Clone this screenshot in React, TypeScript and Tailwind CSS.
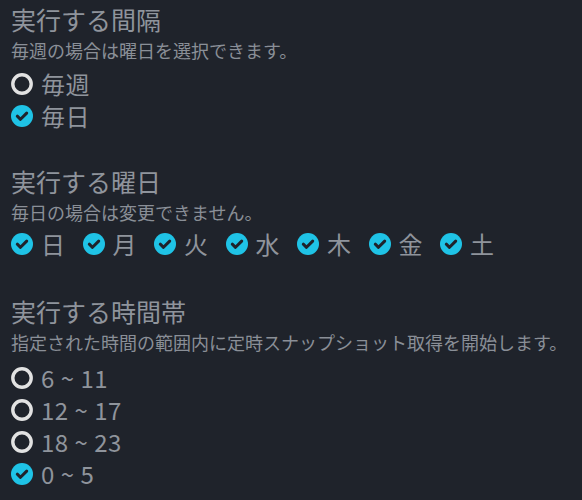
type Opt = { label: string; checked: boolean };

const intervals: Opt[] = [
  { label: "毎週", checked: false },
  { label: "毎日", checked: true },
];

const days: Opt[] = ["日", "月", "火", "水", "木", "金", "土"].map((d) => ({
  label: d,
  checked: true,
}));

const times: Opt[] = [
  { label: "6 ~ 11", checked: false },
  { label: "12 ~ 17", checked: false },
  { label: "18 ~ 23", checked: false },
  { label: "0 ~ 5", checked: true },
];

function Mark({ checked }: { checked: boolean }) {
  if (checked) {
    return (
      <svg viewBox="0 0 22 22" className="h-[22px] w-[22px] shrink-0">
        <circle cx="11" cy="11" r="11" fill="#1fc3e6" />
        <polyline
          points="6.3,11.2 9.5,14.3 15.7,8.1"
          fill="none"
          stroke="#1f232b"
          strokeWidth="3"
          strokeLinecap="round"
          strokeLinejoin="round"
        />
      </svg>
    );
  }
  return (
    <svg viewBox="0 0 22 22" className="h-[22px] w-[22px] shrink-0">
      <circle cx="11" cy="11" r="9.2" fill="none" stroke="#e2e2e2" strokeWidth="3.4" />
    </svg>
  );
}

function Option({ opt }: { opt: Opt }) {
  return (
    <div className="flex h-8 items-center gap-2">
      <Mark checked={opt.checked} />
      <span className="text-[24px] leading-8 tracking-[0.5px] text-[#8f949c]">
        {opt.label}
      </span>
    </div>
  );
}

function Section({
  title,
  note,
  children,
}: {
  title: string;
  note: string;
  children: React.ReactNode;
}) {
  return (
    <section>
      <h2 className="h-8 text-[25px] leading-8 text-[#8f949c]">{title}</h2>
      <p className="h-[30px] text-[18px] leading-[30px] text-[#8a8f97]">
        {note}
      </p>
      {children}
    </section>
  );
}

export default function App() {
  return (
    <div
      className="min-h-[500px] w-full bg-[#1f232b] pl-[11px] pt-[3px]"
      style={{ fontFamily: '"Noto Sans CJK JP", "Noto Sans", sans-serif' }}
    >
      <div className="flex flex-col gap-8">
        <Section title="実行する間隔" note="毎週の場合は曜日を選択できます。">
          <div className="mt-[3px] mb-px">
            {intervals.map((o) => (
              <Option key={o.label} opt={o} />
            ))}
          </div>
        </Section>
        <Section title="実行する曜日" note="毎日の場合は変更できません。">
          <div className="mt-px mb-[3px] flex gap-[17px]">
            {days.map((o) => (
              <Option key={o.label} opt={o} />
            ))}
          </div>
        </Section>
        <Section
          title="実行する時間帯"
          note="指定された時間の範囲内に定時スナップショット取得を開始します。"
        >
          <div className="mt-[5px]">
            {times.map((o) => (
              <Option key={o.label} opt={o} />
            ))}
          </div>
        </Section>
      </div>
    </div>
  );
}
